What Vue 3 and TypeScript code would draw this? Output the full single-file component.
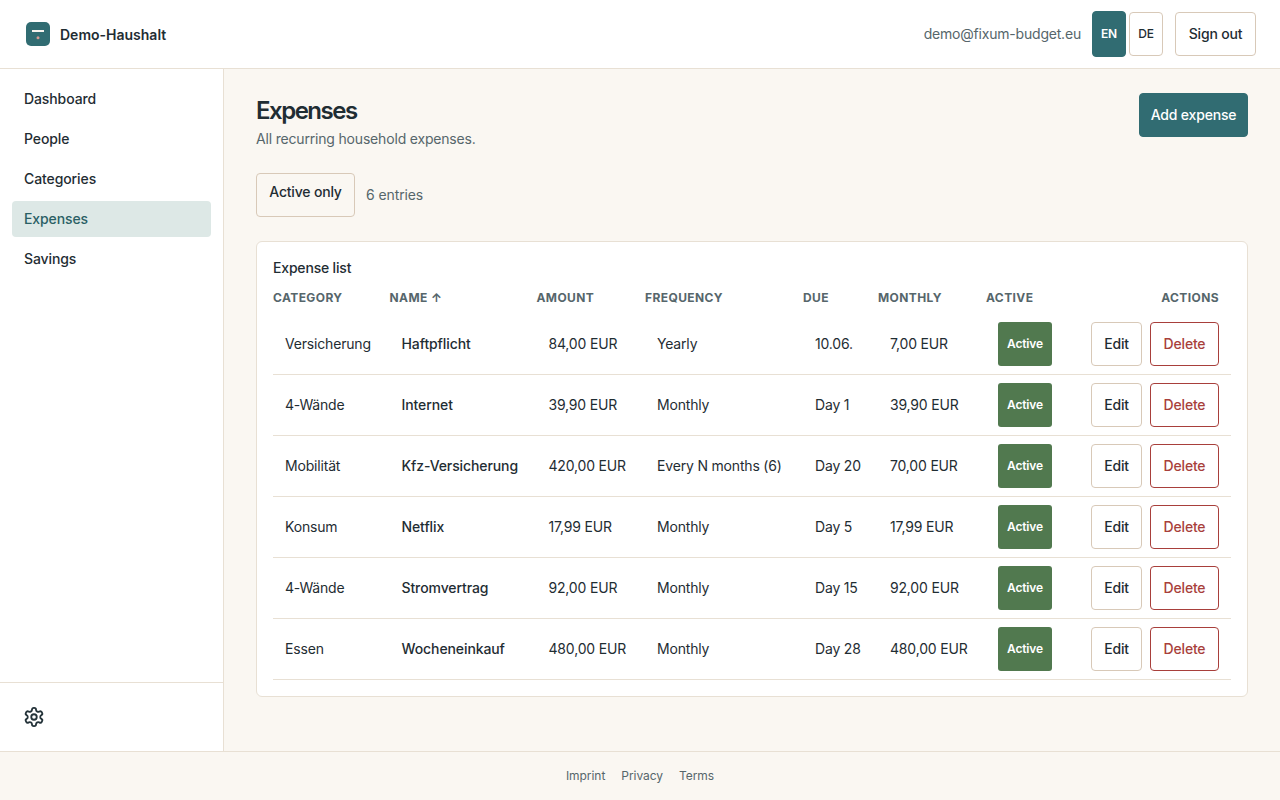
<script setup lang="ts">
interface Expense {
  category: string;
  name: string;
  amount: string;
  frequency: string;
  due: string;
  monthly: string;
}

const navItems = ["Dashboard", "People", "Categories", "Expenses", "Savings"];

const columns = ["Category", "Name ↑", "Amount", "Frequency", "Due", "Monthly", "Active", "Actions"];

const expenses: Expense[] = [
  { category: "Versicherung", name: "Haftpflicht", amount: "84,00 EUR", frequency: "Yearly", due: "10.06.", monthly: "7,00 EUR" },
  { category: "4-Wände", name: "Internet", amount: "39,90 EUR", frequency: "Monthly", due: "Day 1", monthly: "39,90 EUR" },
  { category: "Mobilität", name: "Kfz-Versicherung", amount: "420,00 EUR", frequency: "Every N months (6)", due: "Day 20", monthly: "70,00 EUR" },
  { category: "Konsum", name: "Netflix", amount: "17,99 EUR", frequency: "Monthly", due: "Day 5", monthly: "17,99 EUR" },
  { category: "4-Wände", name: "Stromvertrag", amount: "92,00 EUR", frequency: "Monthly", due: "Day 15", monthly: "92,00 EUR" },
  { category: "Essen", name: "Wocheneinkauf", amount: "480,00 EUR", frequency: "Monthly", due: "Day 28", monthly: "480,00 EUR" },
];
</script>

<template>
  <div class="shell">
    <header class="topbar">
      <div class="brand">
        <svg class="logo" width="24" height="24" viewBox="0 0 24 24">
          <rect width="24" height="24" rx="5" fill="#316c72" />
          <rect x="6" y="8" width="12" height="2" fill="#f7f3ee" />
          <circle cx="12" cy="15.7" r="1.5" fill="#d69a92" />
        </svg>
        <span>Demo-Haushalt</span>
      </div>
      <div class="account">
        <span class="email">demo@fixum-budget.eu</span>
        <div class="lang">
          <button class="lang-btn lang-on">EN</button>
          <button class="lang-btn">DE</button>
        </div>
        <button class="btn signout">Sign out</button>
      </div>
    </header>

    <div class="body">
      <aside class="sidebar">
        <nav class="nav">
          <a v-for="item in navItems" :key="item" class="nav-item" :class="{ current: item === 'Expenses' }">{{ item }}</a>
        </nav>
        <div class="side-foot">
          <svg width="22" height="22" viewBox="0 0 24 24" fill="none" stroke="#25343a" stroke-width="2" stroke-linecap="round" stroke-linejoin="round">
            <path d="M12.22 2h-.44a2 2 0 0 0-2 2v.18a2 2 0 0 1-1 1.73l-.43.25a2 2 0 0 1-2 0l-.15-.08a2 2 0 0 0-2.73.73l-.22.38a2 2 0 0 0 .73 2.73l.15.1a2 2 0 0 1 1 1.72v.51a2 2 0 0 1-1 1.74l-.15.09a2 2 0 0 0-.73 2.73l.22.38a2 2 0 0 0 2.73.73l.15-.08a2 2 0 0 1 2 0l.43.25a2 2 0 0 1 1 1.73V20a2 2 0 0 0 2 2h.44a2 2 0 0 0 2-2v-.18a2 2 0 0 1 1-1.73l.43-.25a2 2 0 0 1 2 0l.15.08a2 2 0 0 0 2.73-.73l.22-.39a2 2 0 0 0-.73-2.73l-.15-.08a2 2 0 0 1-1-1.74v-.5a2 2 0 0 1 1-1.74l.15-.09a2 2 0 0 0 .73-2.73l-.22-.38a2 2 0 0 0-2.73-.73l-.15.08a2 2 0 0 1-2 0l-.43-.25a2 2 0 0 1-1-1.73V4a2 2 0 0 0-2-2z" />
            <circle cx="12" cy="12" r="3" />
          </svg>
        </div>
      </aside>

      <main class="main">
        <div class="page-head">
          <div>
            <h1>Expenses</h1>
            <p class="sub">All recurring household expenses.</p>
          </div>
          <button class="btn primary">Add expense</button>
        </div>

        <div class="filters">
          <button class="filter">Active only</button>
          <span class="count">6 entries</span>
        </div>

        <section class="card">
          <h2>Expense list</h2>
          <table>
            <thead>
              <tr>
                <th v-for="col in columns" :key="col">{{ col }}</th>
              </tr>
            </thead>
            <tbody>
              <tr v-for="row in expenses" :key="row.name">
                <td>{{ row.category }}</td>
                <td class="name">{{ row.name }}</td>
                <td>{{ row.amount }}</td>
                <td>{{ row.frequency }}</td>
                <td>{{ row.due }}</td>
                <td>{{ row.monthly }}</td>
                <td class="ctl"><span class="badge">Active</span></td>
                <td class="ctl">
                  <div class="row-actions">
                    <button class="btn small edit">Edit</button>
                    <button class="btn small danger">Delete</button>
                  </div>
                </td>
              </tr>
            </tbody>
          </table>
        </section>
      </main>
    </div>

    <footer class="footer">
      <a>Imprint</a>
      <a>Privacy</a>
      <a>Terms</a>
    </footer>
  </div>
</template>

<style>
html,
body {
  margin: 0;
  background: #faf7f2;
}
</style>

<style scoped>
.shell {
  display: flex;
  flex-direction: column;
  height: 800px;
  font-family: Inter, "Liberation Sans", sans-serif;
  font-size: 14px;
  letter-spacing: -0.18px;
  color: #1f2d33;
}

button {
  font-family: inherit;
  letter-spacing: inherit;
  cursor: pointer;
}

.topbar {
  height: 69px;
  box-sizing: border-box;
  display: flex;
  align-items: center;
  justify-content: space-between;
  padding: 0 24px 0 26px;
  background: #fff;
  border-bottom: 1px solid #e8e0d4;
}

.brand {
  display: flex;
  align-items: center;
  gap: 10px;
  font-size: 14px;
  font-weight: 600;
  letter-spacing: 0;
}

.logo {
  display: block;
}

.account {
  display: flex;
  align-items: center;
}

.email {
  color: #56666b;
  margin-right: 11px;
  padding-bottom: 2px;
  letter-spacing: -0.2px;
}

.lang {
  display: flex;
  align-items: center;
  gap: 3px;
  margin-right: 12px;
}

.lang-btn {
  width: 34px;
  height: 44px;
  padding: 0 0 2px;
  background: #fff;
  border: 1px solid #d8c9b8;
  border-radius: 4px;
  font-size: 12px;
  font-weight: 500;
  color: #1f2d33;
}

.lang-on {
  height: 46px;
  background: #316c72;
  border-color: #316c72;
  font-weight: 600;
  color: #fff;
}

.btn {
  box-sizing: border-box;
  background: #fff;
  border: 1px solid #d8c9b8;
  border-radius: 4px;
  font-size: 14px;
  font-weight: 500;
  color: #1f2d33;
}

.signout {
  width: 81px;
  height: 44px;
  padding: 0 0 2px;
}

.body {
  flex: 1;
  display: flex;
  min-height: 0;
}

.sidebar {
  width: 224px;
  box-sizing: border-box;
  display: flex;
  flex-direction: column;
  justify-content: space-between;
  background: #fff;
  border-right: 1px solid #e8e0d4;
}

.nav {
  display: flex;
  flex-direction: column;
  gap: 4px;
  padding: 12px 12px 0;
}

.nav-item {
  height: 36px;
  box-sizing: border-box;
  display: flex;
  align-items: center;
  padding: 0 12px 2px;
  border-radius: 4px;
  font-weight: 500;
  letter-spacing: -0.1px;
}

.current {
  background: #dde8e6;
  color: #2a5f65;
}

.side-foot {
  height: 69px;
  box-sizing: border-box;
  display: flex;
  align-items: center;
  padding: 0 23px;
  border-top: 1px solid #e8e0d4;
}

.main {
  flex: 1;
  padding: 24px 32px;
  min-width: 0;
}

.page-head {
  display: flex;
  justify-content: space-between;
  align-items: flex-start;
}

h1 {
  margin: 2px 0 0;
  font-size: 24px;
  line-height: 32px;
  font-weight: 600;
  letter-spacing: -1.5px;
}

.sub {
  margin: 2px 0 0;
  line-height: 20px;
  color: #56666b;
}

.primary {
  width: 109px;
  height: 44px;
  padding: 0 0 2px;
  background: #316c72;
  border-color: #316c72;
  color: #fff;
}

.filters {
  display: flex;
  align-items: center;
  gap: 11px;
  margin-top: 24px;
}

.filter {
  width: 99px;
  height: 44px;
  padding: 0 0 8px;
  background: transparent;
  border: 1px solid #d8c9b8;
  border-radius: 4px;
  font-size: 14px;
  font-weight: 500;
  color: #1f2d33;
}

.count {
  color: #56666b;
  letter-spacing: -0.1px;
  padding-bottom: 2px;
}

.card {
  margin-top: 24px;
  padding: 16px;
  height: 456px;
  box-sizing: border-box;
  background: #fff;
  border: 1px solid #e8e0d4;
  border-radius: 6px;
}

h2 {
  margin: 0;
  font-size: 14px;
  line-height: 20px;
  font-weight: 500;
}

table {
  width: 958px;
  border-collapse: collapse;
  table-layout: fixed;
  margin-top: 2px;
}

th {
  height: 34px;
  padding: 0;
  text-align: left;
  font-size: 12px;
  font-weight: 700;
  letter-spacing: 0.4px;
  text-transform: uppercase;
  color: #56666b;
  white-space: nowrap;
}

th:nth-child(1) { width: 116.5px; }
th:nth-child(2) { width: 147px; }
th:nth-child(3) { width: 108.5px; }
th:nth-child(4) { width: 158px; }
th:nth-child(5) { width: 75px; }
th:nth-child(6) { width: 108px; }
th:nth-child(7) { width: 93px; }

th:last-child {
  text-align: right;
  padding-right: 12px;
}

td {
  height: 60px;
  box-sizing: content-box;
  padding: 0 0 0 12px;
  border-bottom: 1px solid #e8e0d4;
  white-space: nowrap;
}

td:not(.ctl) {
  height: 58px;
  padding-bottom: 2px;
}

.name {
  font-weight: 500;
  letter-spacing: -0.1px;
}

.badge {
  display: inline-flex;
  align-items: center;
  justify-content: center;
  box-sizing: border-box;
  width: 54px;
  height: 44px;
  padding-bottom: 2px;
  background: #51794f;
  border-radius: 3px;
  color: #fff;
  font-size: 12px;
  font-weight: 600;
  vertical-align: middle;
}

.row-actions {
  display: flex;
  justify-content: flex-end;
  gap: 8px;
  padding-right: 12px;
}

.small {
  width: 69px;
  height: 44px;
  padding: 0 0 2px;
}

.edit {
  width: 51px;
}

.danger {
  border-color: #a83f3b;
  color: #a83f3b;
}

.footer {
  height: 49px;
  box-sizing: border-box;
  display: flex;
  align-items: center;
  justify-content: center;
  gap: 16px;
  padding-bottom: 2px;
  border-top: 1px solid #e8e0d4;
  font-size: 12px;
  letter-spacing: -0.05px;
  color: #56666b;
}
</style>
